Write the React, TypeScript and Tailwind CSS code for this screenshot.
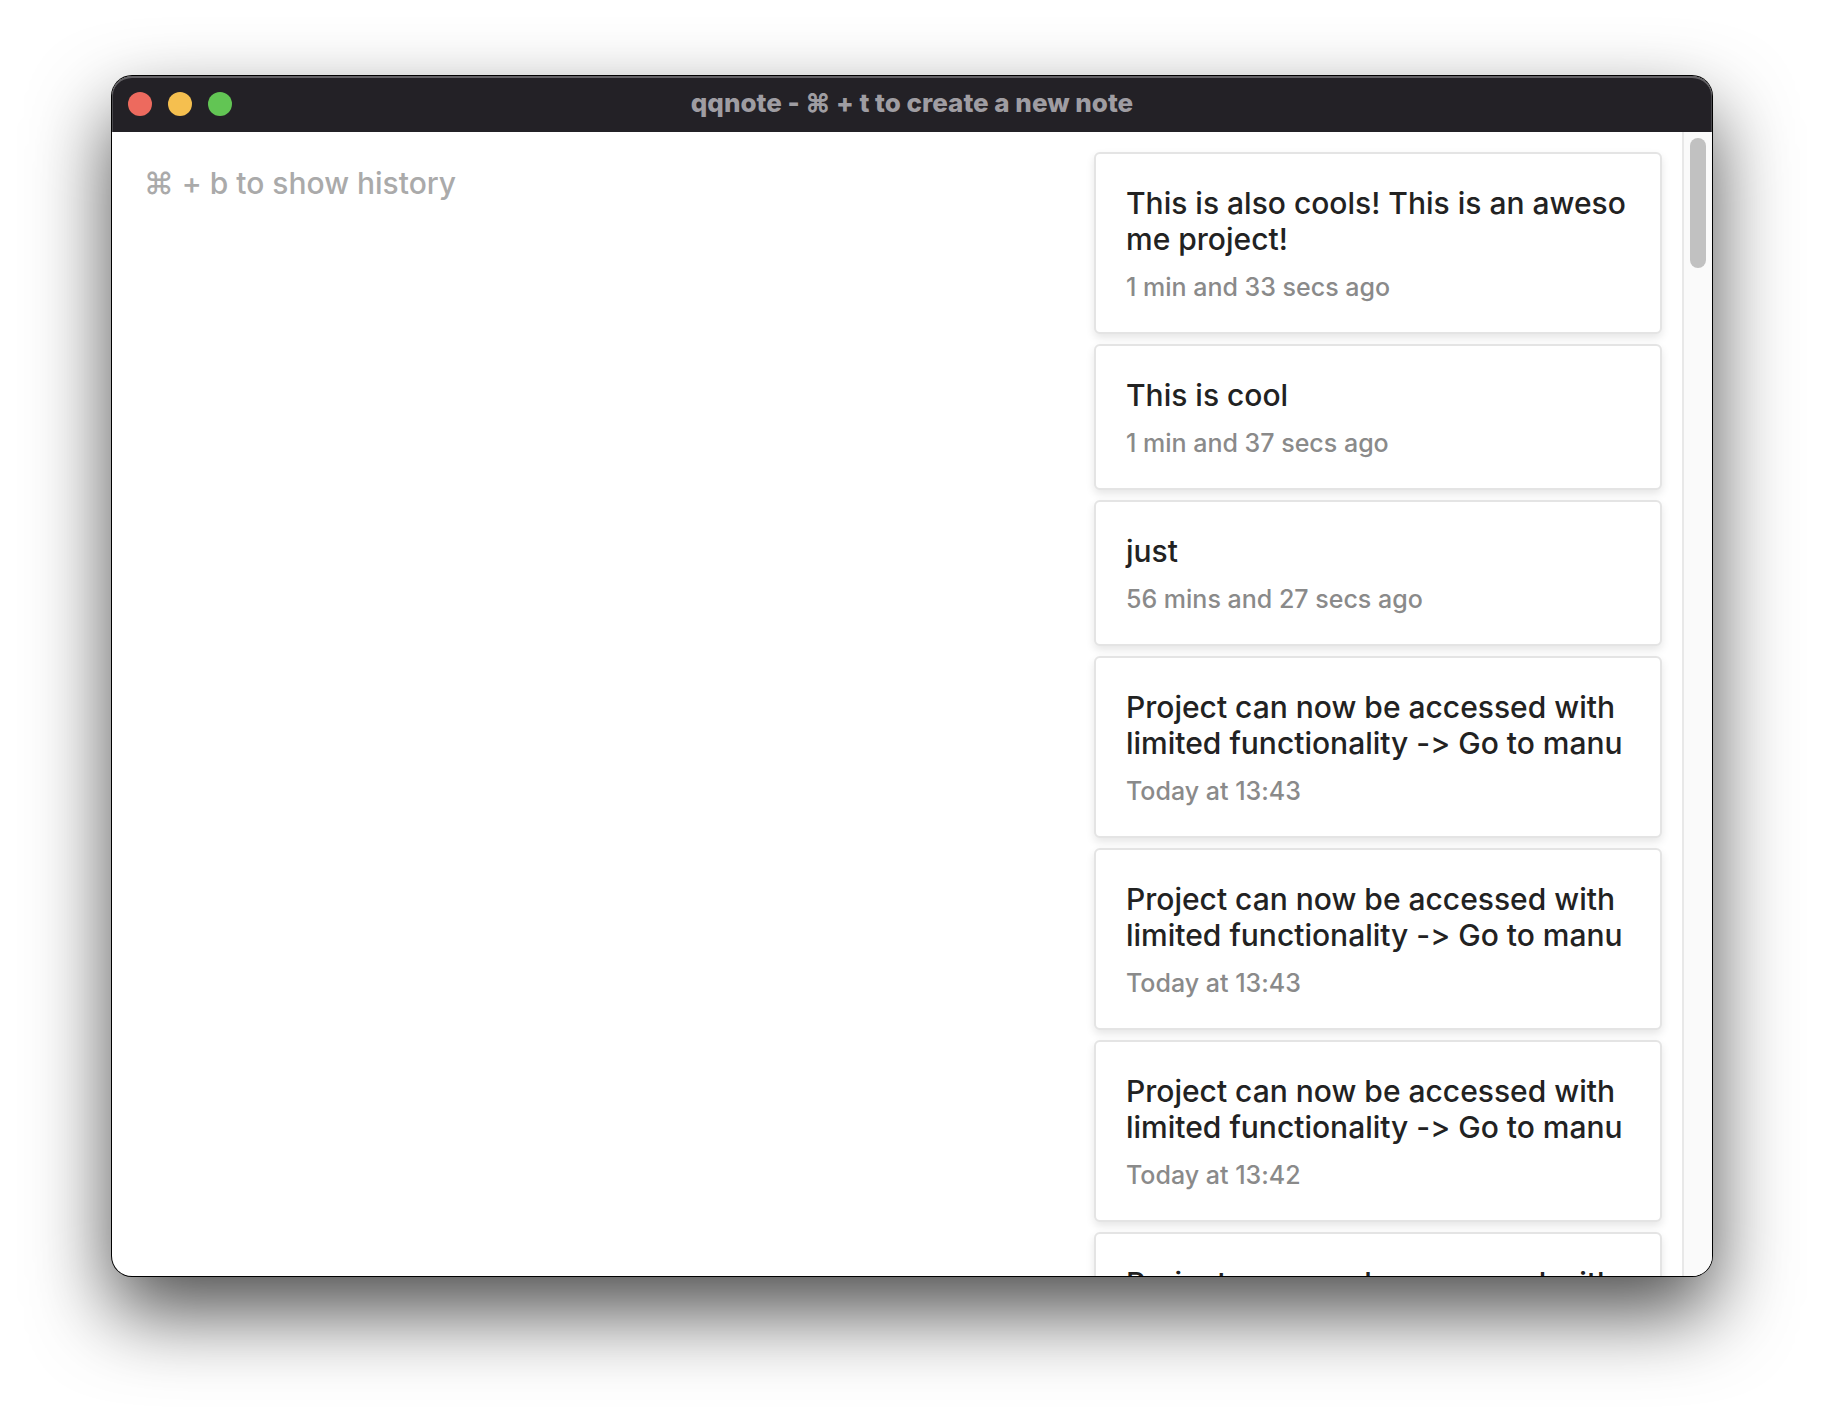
type Note = { id: number; text: string; time: string };

const notes: Note[] = [
  { id: 1, text: "This is also cools! This is an aweso\nme project!", time: "1 min and 33 secs ago" },
  { id: 2, text: "This is cool", time: "1 min and 37 secs ago" },
  { id: 3, text: "just", time: "56 mins and 27 secs ago" },
  { id: 4, text: "Project can now be accessed with\nlimited functionality -> Go to manu", time: "Today at 13:43" },
  { id: 5, text: "Project can now be accessed with\nlimited functionality -> Go to manu", time: "Today at 13:43" },
  { id: 6, text: "Project can now be accessed with\nlimited functionality -> Go to manu", time: "Today at 13:42" },
  { id: 7, text: "Project can now be accessed with\nlimited functionality -> Go to manu", time: "Today at 13:42" },
];

function TitleBar() {
  return (
    <header className="grid h-14 shrink-0 grid-cols-[1fr_auto_1fr] items-center rounded-t-[20px] bg-[#232126] px-4 shadow-[inset_0_2px_0_#646266,inset_1px_0_0_#4a494d,inset_-1px_0_0_#4a494d]">
      <div className="flex gap-4">
        <button type="button" aria-label="Close" className="size-6 rounded-full bg-[#ed6a5e]" />
        <button type="button" aria-label="Minimize" className="size-6 rounded-full bg-[#f5bf4f]" />
        <button type="button" aria-label="Zoom" className="size-6 rounded-full bg-[#62c554]" />
      </div>
      <h1 className="pb-0.5 text-[26px] leading-8 font-extrabold text-[#9f9da2]">
        qqnote - ⌘ + t to create a new note
      </h1>
    </header>
  );
}

function NoteCard({ note }: { note: Note }) {
  return (
    <li className="rounded-md border-2 border-[#e4e4e4] bg-white px-[30px] pt-[31px] pb-[29px] shadow-[0_4px_8px_rgba(0,0,0,0.1)]">
      <p className="text-[30px] leading-9 font-medium whitespace-pre text-[#222222]">{note.text}</p>
      <p className="mt-3.5 text-[25px] leading-8 font-medium text-[#8a8a8a]">{note.time}</p>
    </li>
  );
}

export default function App() {
  return (
    <div className="flex h-screen bg-white px-28 pt-[76px] pb-[148px] font-['Inter',sans-serif] [font-feature-settings:'calt'_0]">
      <div className="flex min-w-0 flex-1 flex-col overflow-hidden rounded-[20px] bg-white shadow-[0_0_0_1px_#000,0_36px_80px_rgba(0,0,0,0.7)]">
        <TitleBar />
        <main className="flex min-h-0 flex-1">
          <textarea
            aria-label="Note"
            placeholder="⌘ + b to show history"
            className="min-w-0 flex-1 resize-none px-8 py-[33px] text-[30px] leading-9 font-medium text-[#222222] outline-none placeholder:text-[#aaaaaa]"
          />
          <ul aria-label="History" className="flex w-[608px] shrink-0 flex-col gap-2.5 overflow-hidden p-5">
            {notes.map((note) => (
              <NoteCard key={note.id} note={note} />
            ))}
          </ul>
          <div className="w-[30px] shrink-0 border-l-2 border-[#e8e8e8] bg-[#fafafa] px-1.5 py-1.5" aria-hidden="true">
            <div className="h-[130px] w-4 rounded-full bg-[#c1c1c1]" />
          </div>
        </main>
      </div>
    </div>
  );
}
